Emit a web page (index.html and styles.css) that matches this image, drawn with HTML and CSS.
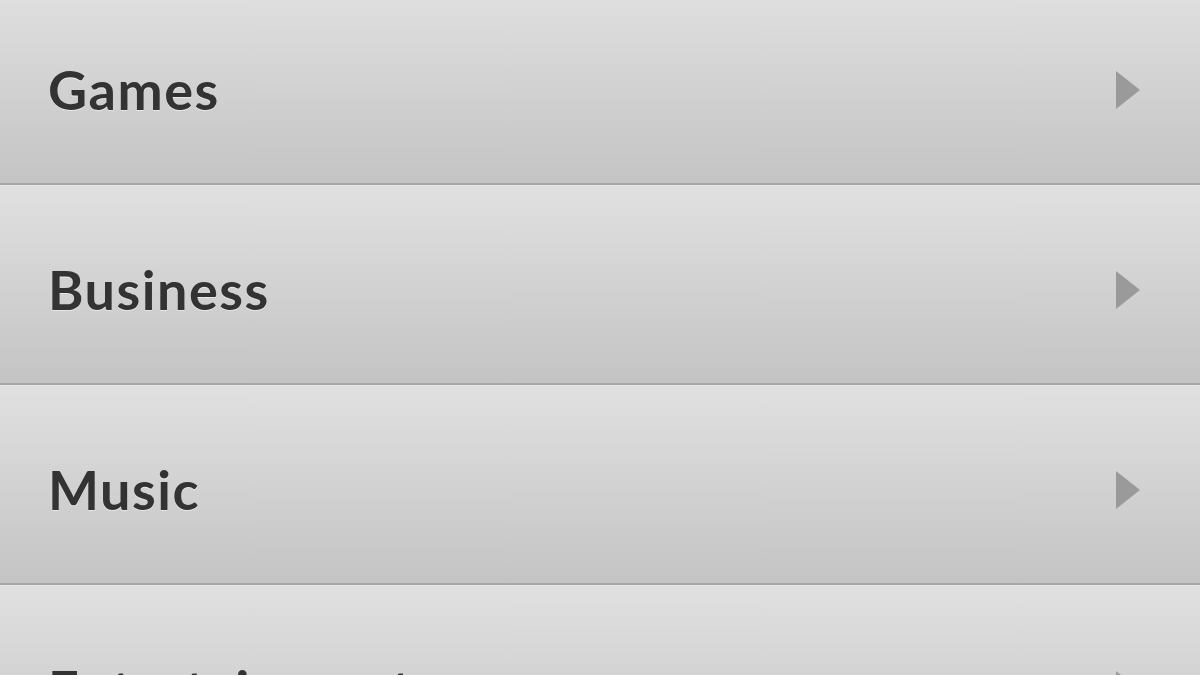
FILE: index.html
```html
<!DOCTYPE html>
<html lang="en">

<head>
  <meta charset="utf-8">
  <meta name="viewport" content="width=device-width, initial-scale=1.0">
  <title>Categories</title>
  <link rel="stylesheet" href="styles.css">
</head>

<body>
  <ul class="category-list">
    <li class="category">
      <span class="category-name">Games</span>
      <svg class="chevron" width="24" height="38" viewBox="0 0 24 38"><polygon points="0,0 24,19 0,38" /></svg>
    </li>
    <li class="category">
      <span class="category-name">Business</span>
      <svg class="chevron" width="24" height="38" viewBox="0 0 24 38"><polygon points="0,0 24,19 0,38" /></svg>
    </li>
    <li class="category">
      <span class="category-name">Music</span>
      <svg class="chevron" width="24" height="38" viewBox="0 0 24 38"><polygon points="0,0 24,19 0,38" /></svg>
    </li>
    <li class="category">
      <span class="category-name">Entertainment</span>
      <svg class="chevron" width="24" height="38" viewBox="0 0 24 38"><polygon points="0,0 24,19 0,38" /></svg>
    </li>
  </ul>
</body>

</html>
```

FILE: styles.css
```css
body,
html {
  margin: 0;
  padding: 0;
  height: 100%;
  overflow: hidden;
  background-color: #d4d4d4;
  font-family: "Lato", "Open Sans", sans-serif;
}

.category-list {
  list-style: none;
  margin: -15px 0 0 0;
  padding: 0;
}

.category {
  display: flex;
  align-items: center;
  justify-content: space-between;
  height: 200px;
  padding: 10px 60px 0 48px;
  box-sizing: border-box;
  background: linear-gradient(#e0e0e0, #c4c4c4);
  border-top: 1px solid #e6e6e6;
  border-bottom: 2px solid #a6a6a6;
}

.category-name {
  font-size: 54px;
  font-weight: bold;
  letter-spacing: 1.5px;
  color: #333333;
  text-shadow: 0 1px 0 rgba(255, 255, 255, 0.5);
}

.chevron {
  fill: #9a9a9a;
}
```
